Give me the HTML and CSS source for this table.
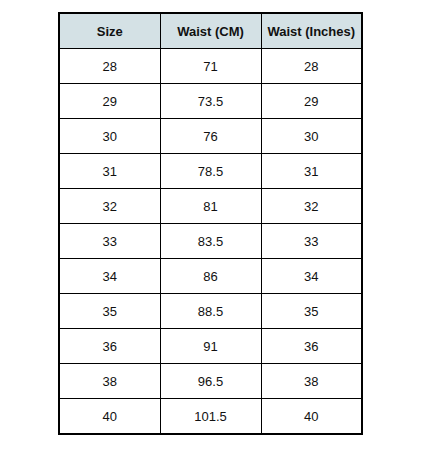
FILE: index.html
```html
<!DOCTYPE html>
<html>
<head>
<meta charset="utf-8">
<link rel="stylesheet" href="styles.css">
</head>
<body>
<table class="size-table">
  <thead>
    <tr><th>Size</th><th>Waist (CM)</th><th>Waist (Inches)</th></tr>
  </thead>
  <tbody>
    <tr><td>28</td><td>71</td><td>28</td></tr>
    <tr><td>29</td><td>73.5</td><td>29</td></tr>
    <tr><td>30</td><td>76</td><td>30</td></tr>
    <tr><td>31</td><td>78.5</td><td>31</td></tr>
    <tr><td>32</td><td>81</td><td>32</td></tr>
    <tr><td>33</td><td>83.5</td><td>33</td></tr>
    <tr><td>34</td><td>86</td><td>34</td></tr>
    <tr><td>35</td><td>88.5</td><td>35</td></tr>
    <tr><td>36</td><td>91</td><td>36</td></tr>
    <tr><td>38</td><td>96.5</td><td>38</td></tr>
    <tr><td>40</td><td>101.5</td><td>40</td></tr>
  </tbody>
</table>
</body>
</html>
```

FILE: styles.css
```css
html, body {
  margin: 0;
  padding: 0;
  background: #ffffff;
}
body {
  padding: 12px 0 0 58px;
  font-family: "Liberation Sans", Arial, sans-serif;
  color: #111;
}
.size-table {
  border-collapse: collapse;
  width: 305px;
  table-layout: fixed;
  border: 2px solid #000;
}
.size-table th,
.size-table td {
  border: 1px solid #000;
  height: 34px;
  padding: 0;
  text-align: center;
  vertical-align: middle;
  font-size: 13px;
}
.size-table th {
  background: #d4e1e5;
  font-weight: bold;
}
```
